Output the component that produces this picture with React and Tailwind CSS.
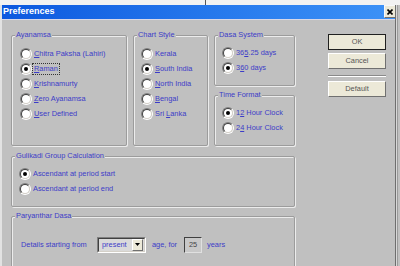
import React from 'react';

// Radio bulat gaya Windows klasik
function Radio({ checked }) {
  return (
    <span className="w-[12px] h-[12px] shrink-0 rounded-full border border-[#808080] border-r-white border-b-white">
      <span className="flex items-center justify-center w-full h-full rounded-full border border-[#404040] border-r-[#d4d0c8] border-b-[#d4d0c8] bg-white">
        {checked && <span className="w-[4px] h-[4px] rounded-full bg-black" />}
      </span>
    </span>
  );
}

function Option({ checked, focus, children }) {
  return (
    <div className="flex items-center h-[15px]">
      <Radio checked={checked} />
      <span className={`ml-px px-px leading-[10px] ${focus ? 'outline outline-1 outline-dotted outline-[#333]' : ''}`}>
        {children}
      </span>
    </div>
  );
}

function Group({ title, className, children }) {
  return (
    <div className={`relative border border-[#9c9c9c] rounded-[2px] shadow-[inset_1px_1px_0_#ececec,1px_1px_0_#ececec] ${className}`}>
      <span className="absolute -top-[6px] left-[3px] px-px leading-[10px] bg-[#c0c0c0]">{title}</span>
      {children}
    </div>
  );
}

function Button({ isDefault, children }) {
  return (
    <div
      className={`w-[58px] h-[16px] flex items-center justify-center bg-[#ece9d8] text-[#555] border ${
        isDefault ? 'border-[#202020]' : 'border-white border-r-[#707070] border-b-[#707070]'
      }`}
    >
      {children}
    </div>
  );
}

export default function App() {
  return (
    <div className="w-[400px] h-[266px] overflow-hidden bg-[#c0c0c0] font-['Liberation_Sans',Arial,sans-serif] text-[7.4px] text-[#3c3cc8]">
      {/* strip atas */}
      <div className="flex h-[5px] bg-[#f2f2f2]">
        <div className="w-[205px]" />
        <div className="w-px bg-[#555]" />
      </div>

      <div className="flex h-[261px]">
        <div className="w-[2px] bg-[#e2e2e2]" />

        <div className="w-[393px] flex flex-col">
          {/* --- title bar --- */}
          <div className="h-[20px] flex items-center justify-between bg-gradient-to-r from-[#0c58df] to-[#3d92f7] border-b border-[#d8d8e8]">
            <span className="ml-px text-[9px] font-bold text-white">Preferences</span>
            <span className="w-[12px] h-[13px] mr-[-1px] flex items-center justify-center bg-[#ece9d8] border border-[#f8f8f8] border-r-[#707070] border-b-[#707070]">
              <svg width="6" height="6" viewBox="0 0 6 6">
                <path d="M0.5 0.5L5.5 5.5M5.5 0.5L0.5 5.5" stroke="#000" strokeWidth="1.6" />
              </svg>
            </span>
          </div>

          {/* --- isi dialog --- */}
          <div className="flex-1 pl-[9px] pt-[15px]">
            <div className="flex">
              <Group title="Ayanamsa" className="w-[116px] h-[111px] pt-[11px] pl-[8px]">
                <Option><u>C</u>hitra Paksha (Lahiri)</Option>
                <Option checked focus><u>R</u>aman</Option>
                <Option><u>K</u>rishnamurty</Option>
                <Option><u>Z</u>ero Ayanamsa</Option>
                <Option><u>U</u>ser Defined</Option>
              </Group>

              <Group title="Chart Style" className="ml-[6px] w-[75px] h-[111px] pt-[11px] pl-[7px]">
                <Option>Kerala</Option>
                <Option checked><u>S</u>outh India</Option>
                <Option><u>N</u>orth India</Option>
                <Option><u>B</u>engal</Option>
                <Option>Sri <u>L</u>anka</Option>
              </Group>

              <div className="ml-[6px] w-[81px] flex flex-col gap-[9px]">
                <Group title="Dasa System" className="h-[51px] pt-[10px] pl-[7px]">
                  <Option>36<u>5</u>.25 days</Option>
                  <Option checked>3<u>6</u>0 days</Option>
                </Group>
                <Group title="Time Format" className="h-[51px] pt-[10px] pl-[7px]">
                  <Option checked>1<u>2</u> Hour Clock</Option>
                  <Option>2<u>4</u> Hour Clock</Option>
                </Group>
              </div>

              <div className="ml-[33px] -mt-px flex flex-col">
                <Button isDefault>OK</Button>
                <div className="mt-[3px]"><Button>Cancel</Button></div>
                <div className="mt-[6px] h-[2px] border-t border-[#8a8a8a] border-b border-b-white" />
                <div className="mt-[4px]"><Button>Default</Button></div>
              </div>
            </div>

            <Group title="Gulikadi Group Calculation" className="mt-[10px] w-[284px] h-[51px] pt-[10px] pl-[7px]">
              <Option checked>Ascendant at period start</Option>
              <Option>Ascendant at period end</Option>
            </Group>

            <Group title="Paryanthar Dasa" className="mt-[9px] w-[284px] h-[60px] pt-[20px] pl-[9px]">
              <div className="flex items-center h-[16px]">
                <span className="w-[76px]">Details starting from</span>
                <div className="w-[49px] h-[16px] flex items-center border border-[#808080] border-r-white border-b-white">
                  <div className="flex-1 h-full flex items-center border border-[#404040] border-r-[#d4d0c8] border-b-[#d4d0c8] bg-[#dadada]">
                    <span className="flex-1 pl-[3px]">present</span>
                    <span className="w-[11px] h-[12px] mr-px flex items-center justify-center bg-[#ece9d8] border border-white border-r-[#707070] border-b-[#707070]">
                      <svg width="5" height="3" viewBox="0 0 5 3"><path d="M0 0h5L2.5 3z" fill="#000" /></svg>
                    </span>
                  </div>
                </div>
                <span className="ml-[6px] w-[32px]">age, for</span>
                <div className="w-[18px] h-[16px] flex items-center justify-center border border-[#404040] border-r-[#e0e0e0] border-b-[#e0e0e0] bg-[#c8c8c8] text-[#444]">
                  25
                </div>
                <span className="ml-[5px]">years</span>
              </div>
            </Group>
          </div>
        </div>

        <div className="w-px bg-[#6e6e6e]" />
        <div className="w-px bg-[#d8d8d8]" />
        <div className="w-px bg-[#9a9a9a]" />
      </div>
    </div>
  );
}
